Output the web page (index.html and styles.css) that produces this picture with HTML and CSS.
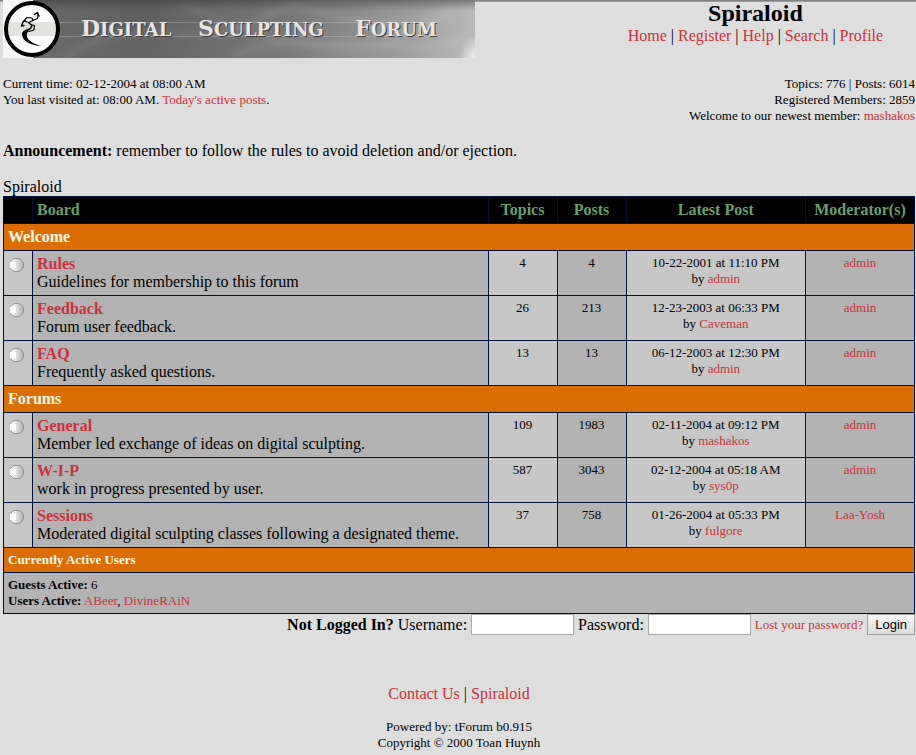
FILE: index.html
```
<!DOCTYPE html>
<html lang="en">
<head>
<meta charset="utf-8">
<title>Spiraloid</title>
<link rel="stylesheet" href="styles.css">
</head>
<body>
<header class="top">
  <svg class="banner" viewBox="0 0 472 58" role="img" aria-label="Digital Sculpting Forum">
    <defs>
      <linearGradient id="haze" x1="0" y1="0" x2="1" y2="0">
        <stop offset="0" stop-color="#6c6c6c"/>
        <stop offset="0.3" stop-color="#606060"/>
        <stop offset="0.6" stop-color="#7a7a7a"/>
        <stop offset="0.85" stop-color="#a0a0a0"/>
        <stop offset="1" stop-color="#c2c2c2"/>
      </linearGradient>
      <linearGradient id="shade" x1="0" y1="0" x2="0" y2="1">
        <stop offset="0" stop-color="#333" stop-opacity="0.5"/>
        <stop offset="0.2" stop-color="#555" stop-opacity="0.1"/>
        <stop offset="1" stop-color="#888" stop-opacity="0.1"/>
      </linearGradient>
      <radialGradient id="corner">
        <stop offset="0" stop-color="#fff" stop-opacity="0.8"/>
        <stop offset="1" stop-color="#fff" stop-opacity="0"/>
      </radialGradient>
      <filter id="soft" x="-10%" y="-50%" width="120%" height="200%"><feGaussianBlur stdDeviation="3"/></filter>
      <linearGradient id="ball" x1="0" y1="0" x2="1" y2="0">
        <stop offset="0.2" stop-color="#f4f4f4"/>
        <stop offset="1" stop-color="#b4b4b4"/>
      </linearGradient>
      <symbol id="mark" viewBox="0 0 14 14">
        <path d="M0.5 4V3.5L2.5 1.5L4.5 0.5H8L11 1.5L13.5 5V9L11 12.5L8 13.5H4.5L2.5 12.5L0.5 10.5V10" fill="url(#ball)" stroke="#909090"/>
        <path d="M0 4H6V10H0Z" fill="#fff"/>
      </symbol>
    </defs>
    <rect width="472" height="58" fill="url(#haze)"/>
    <g fill="none" stroke="#fff" stroke-opacity="0.1" stroke-width="5" filter="url(#soft)">
      <path d="M60 60C120 10 200 50 250 22S330 0 360 -5"/>
      <path d="M180 4C260 44 340 60 400 38S440 10 450 0"/>
      <path d="M230 56C290 25 350 60 472 40"/>
      <path d="M280 0C340 24 390 30 472 8"/>
    </g>
    <rect width="472" height="58" fill="url(#shade)"/>
    <ellipse cx="472" cy="58" rx="16" ry="22" fill="url(#corner)"/>
    <path d="M0 0H30V58H0Z" fill="#f7f7f7"/>
    <circle cx="29" cy="29" r="26" fill="#fdfdfd"/>
    <path d="M5 22H53V36H5Z" fill="#e2e3df"/>
    <path d="M56 22.5H472M56 36.5H472" stroke="#b5b5b5" stroke-opacity="0.45"/>
    <circle cx="29" cy="29" r="26" fill="none" stroke="#000" stroke-width="4"/>
    <g fill="none" stroke="#000" stroke-linecap="round" stroke-linejoin="round">
      <path d="M22 20L20 22L18.5 26L21 25.5" stroke-width="1.5"/>
      <path d="M21 21L24 17.5L29 18L30 20.5L26 22.5Z" stroke-width="1.2"/>
      <path d="M29.5 20.5L34.5 18.5L35 14.5" stroke-width="1.2"/>
      <path d="M31.5 14.5L34.5 12.5L36 16" stroke-width="1.5"/>
      <path d="M26 23L29 25.5L27.5 28.5L21 31.5L19.5 34" stroke-width="1.5"/>
      <path d="M28.5 25L31.5 25.5L31 30L26 31.5" stroke-width="1.2"/>
    </g>
    <path d="M26 31C23 33 23 37 26 40C29 43 33 44 38 46C29 45.5 22 42 20 38C18 34 20 31 25 29.5Z"/>
    <g class="banner-text banner-shadow" aria-hidden="true">
      <text x="79" y="37">D<tspan class="low">IGITAL</tspan></text><text x="196" y="37">S<tspan class="low">CULPTING</tspan></text><text x="353" y="37">F<tspan class="low">ORUM</tspan></text>
    </g>
    <g class="banner-text">
      <text x="78" y="36">D<tspan class="low">IGITAL</tspan></text><text x="195" y="36">S<tspan class="low">CULPTING</tspan></text><text x="352" y="36">F<tspan class="low">ORUM</tspan></text>
    </g>
  </svg>
  <div class="site">
    <h1>Spiraloid</h1>
    <nav><a href="#">Home</a> | <a href="#">Register</a> | <a href="#">Help</a> | <a href="#">Search</a> | <a href="#">Profile</a></nav>
  </div>
</header>
<section class="info small">
  <p>Current time: 02-12-2004 at 08:00 AM<br>You last visited at: 08:00 AM. <a href="#">Today's active posts</a>.</p>
  <p class="stats">Topics: 776 | Posts: 6014<br>Registered Members: 2859<br>Welcome to our newest member: <a href="#">mashakos</a></p>
</section>
<p class="announcement"><b>Announcement:</b> remember to follow the rules to avoid deletion and/or ejection.</p>
<p>Spiraloid</p>
<table class="boards">
  <colgroup><col class="c-icon"><col class="c-board"><col class="c-count"><col class="c-count"><col><col class="c-mod"></colgroup>
  <thead>
    <tr><th></th><th class="left">Board</th><th>Topics</th><th>Posts</th><th>Latest Post</th><th>Moderator(s)</th></tr>
  </thead>
  <tbody>
    <tr><th class="group" colspan="6">Welcome</th></tr>
    <tr><td class="lite"><svg class="mark"><use href="#mark"/></svg></td><td><a class="name" href="#">Rules</a><br>Guidelines for membership to this forum</td><td class="num lite">4</td><td class="num">4</td><td class="num lite">10-22-2001 at 11:10 PM<br>by <a href="#">admin</a></td><td class="num"><a href="#">admin</a></td></tr>
    <tr><td class="lite"><svg class="mark"><use href="#mark"/></svg></td><td><a class="name" href="#">Feedback</a><br>Forum user feedback.</td><td class="num lite">26</td><td class="num">213</td><td class="num lite">12-23-2003 at 06:33 PM<br>by <a href="#">Caveman</a></td><td class="num"><a href="#">admin</a></td></tr>
    <tr><td class="lite"><svg class="mark"><use href="#mark"/></svg></td><td><a class="name" href="#">FAQ</a><br>Frequently asked questions.</td><td class="num lite">13</td><td class="num">13</td><td class="num lite">06-12-2003 at 12:30 PM<br>by <a href="#">admin</a></td><td class="num"><a href="#">admin</a></td></tr>
    <tr><th class="group" colspan="6">Forums</th></tr>
    <tr><td class="lite"><svg class="mark"><use href="#mark"/></svg></td><td><a class="name" href="#">General</a><br>Member led exchange of ideas on digital sculpting.</td><td class="num lite">109</td><td class="num">1983</td><td class="num lite">02-11-2004 at 09:12 PM<br>by <a href="#">mashakos</a></td><td class="num"><a href="#">admin</a></td></tr>
    <tr><td class="lite"><svg class="mark"><use href="#mark"/></svg></td><td><a class="name" href="#">W-I-P</a><br>work in progress presented by user.</td><td class="num lite">587</td><td class="num">3043</td><td class="num lite">02-12-2004 at 05:18 AM<br>by <a href="#">sys0p</a></td><td class="num"><a href="#">admin</a></td></tr>
    <tr><td class="lite"><svg class="mark"><use href="#mark"/></svg></td><td><a class="name" href="#">Sessions</a><br>Moderated digital sculpting classes following a designated theme.</td><td class="num lite">37</td><td class="num">758</td><td class="num lite">01-26-2004 at 05:33 PM<br>by <a href="#">fulgore</a></td><td class="num"><a href="#">Laa-Yosh</a></td></tr>
    <tr><th class="group small" colspan="6">Currently Active Users</th></tr>
    <tr><td class="small" colspan="6"><b>Guests Active:</b> 6<br><b>Users Active:</b> <a href="#">ABeer</a>, <a href="#">DivineRAiN</a></td></tr>
  </tbody>
</table>
<form class="login">
  <b>Not Logged In?</b>
  <label for="user">Username:</label><input id="user" type="text">
  <label for="pass">Password:</label><input id="pass" type="password">
  <a class="small" href="#">Lost your password?</a>
  <button type="button">Login</button>
</form>
<footer>
  <p><a href="#">Contact Us</a> | <a href="#">Spiraloid</a></p>
  <p class="small credits">Powered by: tForum b0.915<br>Copyright © 2000 Toan Huynh</p>
</footer>
</body>
</html>
```
FILE: styles.css
```
body {
  margin: 0;
  padding: 0 1px 0 3px;
  background: linear-gradient(#747474, #a8a8a8) 0 0 / 100% 2px no-repeat #dedede;
  color: #000;
  font: 16px/18px "Liberation Serif", "Times New Roman", serif;
}
p, h1 { margin: 0; }
a { color: #c83238; text-decoration: none; }
.small { font-size: 13px; line-height: 16px; }

.top { display: flex; justify-content: space-between; align-items: flex-start; }
.banner { display: block; width: 472px; height: 58px; }
.banner-text { font: bold 22px "DejaVu Serif", serif; fill: #e6e6e6; }
.banner-text .low { font-size: 18px; }
.banner-shadow { fill: #3c3c3c; }
.site { width: 35%; text-align: center; }
h1 { font-size: 24px; line-height: 27px; }

.info { display: flex; justify-content: space-between; margin-top: 18px; }
.stats { text-align: right; }
.announcement { margin: 18px 0; }

.boards { width: 100%; table-layout: fixed; border-collapse: collapse; }
.c-icon { width: 29px; }
.c-board { width: 50%; }
.c-count { width: 69px; }
.c-mod { width: 109px; }
.boards th, .boards td {
  padding: 4px;
  border: 1px solid #00103a;
  background: #b3b3b3;
  vertical-align: top;
  text-align: left;
}
.boards thead th { background: #000; color: #6b9e6b; text-align: center; }
.boards thead .left { text-align: left; }
.boards .group { background: #da6e04; color: #fffbe8; }
.boards .lite { background: #c7c7c7; }
.boards .num { text-align: center; font-size: 13px; line-height: 16px; }
.name { font-weight: bold; }
.mark { display: block; width: 14px; height: 14px; margin: 3px 0 0 2px; }

.login { display: flex; justify-content: flex-end; align-items: center; gap: 4px; }
.login input {
  box-sizing: border-box;
  width: 103px;
  height: 21px;
  border: 1px solid #a9a9a9;
  background: #fff;
}
.login button {
  box-sizing: border-box;
  height: 21px;
  padding: 0 7px;
  border: 1px solid #a0a0a0;
  background: linear-gradient(#f6f6f6, #dcdcdc);
  color: #000;
  font: 13px "Liberation Sans", Arial, sans-serif;
}
footer { margin-top: 50px; text-align: center; }
.credits { margin-top: 16px; padding-bottom: 4px; }
```
